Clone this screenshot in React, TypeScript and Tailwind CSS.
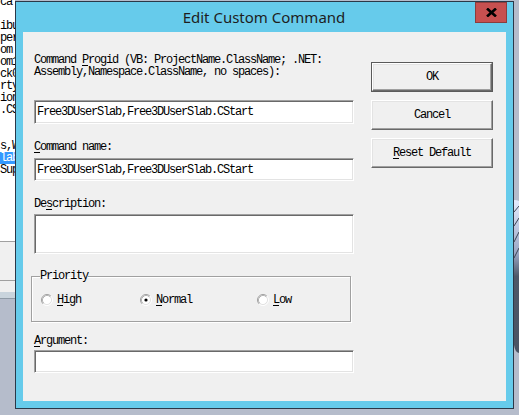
import React from "react";

// classic dialog text: narrow fixed-pitch face, 6px per glyph
const mono =
  "font-['Liberation_Mono','DejaVu_Sans_Mono',monospace] text-[12px] leading-[12px] tracking-[-1.2px] text-black";

const listRows = ["ca", "", "ibu", "per", "om ", "om1", "ck0", "rty", "ion", ".CS", "", "", "s,W", "lab", "Sup"];

function Key({ children }: { children: React.ReactNode }) {
  return <span className="underline underline-offset-[2px]">{children}</span>;
}

function Field({ value, h = "h-[23px]" }: { value?: string; h?: string }) {
  return (
    <div
      className={`${h} w-full bg-white border border-t-[#a0a0a0] border-l-[#a0a0a0] border-b-white border-r-white shadow-[inset_1px_1px_0_#696969,inset_-1px_-1px_0_#e3e3e3] flex items-start pt-[5px] pl-[2px] ${mono}`}
    >
      {value}
    </div>
  );
}

function Radio({ checked }: { checked?: boolean }) {
  return (
    <svg width="12" height="12" viewBox="0 0 12 12" className="shrink-0">
      <circle cx="6" cy="6" r="4.5" fill="#fff" />
      <path d="M2.11 9.89 A5.5 5.5 0 0 1 9.89 2.11" fill="none" stroke="#a0a0a0" />
      <path d="M9.89 2.11 A5.5 5.5 0 0 1 2.11 9.89" fill="none" stroke="#ffffff" />
      <path d="M2.82 9.18 A4.5 4.5 0 0 1 9.18 2.82" fill="none" stroke="#b4b4b4" />
      <path d="M9.18 2.82 A4.5 4.5 0 0 1 2.82 9.18" fill="none" stroke="#e3e3e3" />
      {checked && <circle cx="6" cy="6" r="1.6" fill="#000" />}
    </svg>
  );
}

function Button({ children, isDefault }: { children: React.ReactNode; isDefault?: boolean }) {
  const face = (
    <div
      className={`flex-1 flex items-center justify-center bg-[#f0f0f0] border border-t-white border-l-white border-r-[#696969] border-b-[#696969] shadow-[inset_-1px_-1px_0_#a0a0a0,inset_1px_1px_0_#e3e3e3] ${mono}`}
    >
      {children}
    </div>
  );
  return isDefault ? (
    <div className="h-[30px] flex border border-[#5a5a5a]">{face}</div>
  ) : (
    <div className="h-[30px] flex">{face}</div>
  );
}

export default function App() {
  return (
    <div className="w-[519px] h-[415px] flex overflow-hidden bg-[#b5bccb]">
      {/* window behind the dialog, left edge */}
      <div className="w-[15px] shrink-0 flex flex-col">
        <div className="h-[241px] bg-white overflow-hidden">
          <div className={`-mt-[4px] ${mono}`}>
            {listRows.map((r, i) => (
              <div
                key={i}
                className={`h-[12px] w-[15px] overflow-hidden whitespace-pre ${r === "lab" ? "bg-[#3399ff] text-white" : ""}`}
              >
                {r}
              </div>
            ))}
          </div>
        </div>
        <div className="h-[39px] border-t border-[#a0a0a0] bg-[#f0f0f0]" />
        <div className="h-[12px] border-t border-[#a0a0a0] bg-[#f0f0f0]" />
        <div className="h-[6px] bg-[#c9d4dd]" />
        <div className="flex-1 border-t border-[#8e9aa6] bg-[#b5bccb]" />
      </div>

      {/* dialog */}
      <div className="mt-[1px] w-[499px] h-[408px] shrink-0 flex flex-col border border-[#2b3848] bg-[#66cbeb]">
        <div className="relative h-[30px] shrink-0 flex items-center justify-center">
          <span className="font-['Noto_Sans',sans-serif] text-[15px] text-[#1e1e1e] -ml-[1px]">
            Edit Custom Command
          </span>
          <div className="absolute top-0 right-[6px] w-[32px] h-[21px] bg-[#c75050] border border-[#8b3d3d] flex items-center justify-center">
            <svg width="11" height="9" viewBox="0 0 11 9">
              <path d="M1 0.5 L10 8.5 M10 0.5 L1 8.5" stroke="#000" strokeWidth="2.6" />
            </svg>
          </div>
        </div>

        <div className="flex-1 mx-[7px] mb-[7px] bg-[#f0f0f0] flex">
          <div className="ml-[11px] w-[320px] flex flex-col pt-[22px]">
            <p className={mono}>
              Command <Key>P</Key>rogid (VB: ProjectName.ClassName; .NET:
              <br />
              Assembly,Namespace.ClassName, no spaces):
            </p>
            <div className="mt-[22px]">
              <Field value="Free3DUserSlab,Free3DUserSlab.CStart" h="h-[24px]" />
            </div>

            <p className={`mt-[17px] ${mono}`}>
              <Key>C</Key>ommand name:
            </p>
            <div className="mt-[5px]">
              <Field value="Free3DUserSlab,Free3DUserSlab.CStart" />
            </div>

            <p className={`mt-[17px] ${mono}`}>
              De<Key>s</Key>cription:
            </p>
            <div className="mt-[4px]">
              <Field h="h-[40px]" />
            </div>

            <fieldset className="mt-[16px] -ml-[3px] w-[320px] border border-[#a0a0a0] shadow-[inset_1px_1px_0_#fff,1px_1px_0_#fff] pl-[8px] pb-[15px]">
              <legend className={mono}>Priority</legend>
              <div className={`mt-[12px] ml-[1px] flex items-center ${mono}`}>
                <div className="w-[99px] flex items-center gap-[4px]">
                  <Radio />
                  <span>
                    <Key>H</Key>igh
                  </span>
                </div>
                <div className="w-[117px] flex items-center gap-[4px]">
                  <Radio checked />
                  <span>
                    <Key>N</Key>ormal
                  </span>
                </div>
                <div className="flex items-center gap-[4px]">
                  <Radio />
                  <span>
                    <Key>L</Key>ow
                  </span>
                </div>
              </div>
            </fieldset>

            <p className={`mt-[13px] ${mono}`}>
              <Key>A</Key>rgument:
            </p>
            <div className="mt-[3px]">
              <Field />
            </div>
          </div>

          <div className="ml-[17px] w-[122px] pt-[30px] flex flex-col gap-[8px]">
            <Button isDefault>OK</Button>
            <Button>Cancel</Button>
            <Button>
              <span>
                <Key>R</Key>eset Default
              </span>
            </Button>
          </div>
        </div>
      </div>

      {/* desktop edge on the right */}
      <div className="flex-1 bg-[#b5bccb]">
        <svg width="5" height="415" viewBox="0 0 5 415">
          <defs>
            <linearGradient id="edge" x1="0" y1="0" x2="0" y2="1">
              <stop offset="0" stopColor="#e4ecff" />
              <stop offset="0.35" stopColor="#9aa6c4" />
              <stop offset="0.5" stopColor="#4e5868" />
              <stop offset="1" stopColor="#4a5464" />
            </linearGradient>
          </defs>
          <path d="M0 200 Q3 200 5 201 L5 353 Q1 352 0 345 Z" fill="url(#edge)" />
          <path d="M0 212 L5 206 M0 226 L5 218 M0 242 L5 232 M0 258 L5 248" stroke="#3c4656" strokeWidth="1" />
        </svg>
      </div>
    </div>
  );
}
